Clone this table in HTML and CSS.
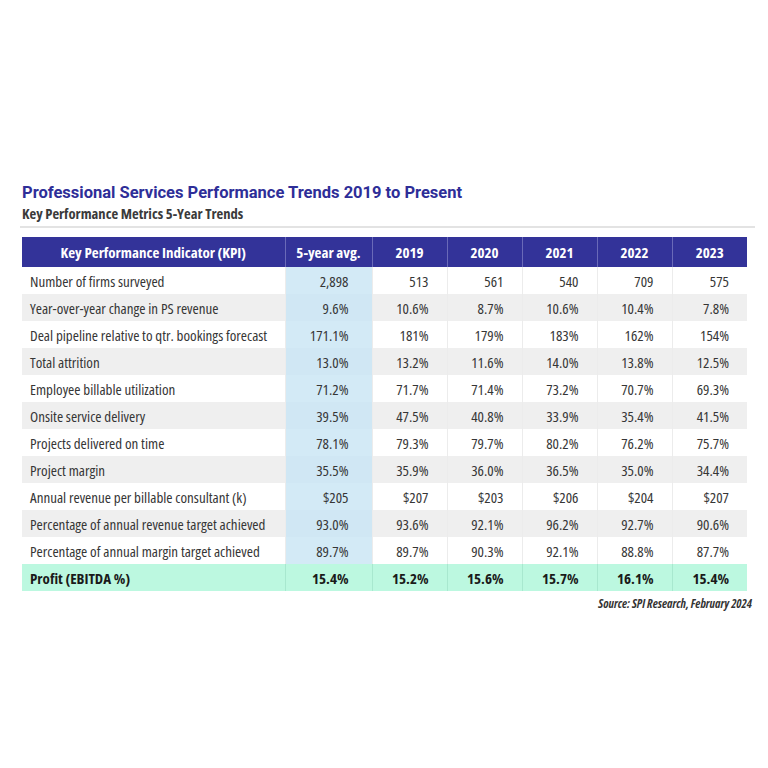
FILE: index.html
```html
<!DOCTYPE html>
<html>
<head>
<meta charset="utf-8">
<link rel="stylesheet" href="styles.css">
</head>
<body>
<div class="page">
  <h1 class="title">Professional Services Performance Trends 2019 to Present</h1>
  <h2 class="subtitle">Key Performance Metrics 5-Year Trends</h2>
  <div class="rule"></div>
  <table class="kpi">
    <colgroup>
      <col class="c-kpi"><col class="c-avg"><col class="c-yr"><col class="c-yr"><col class="c-yr"><col class="c-yr"><col class="c-yr">
    </colgroup>
    <thead>
      <tr><th>Key Performance Indicator (KPI)</th><th>5-year avg.</th><th>2019</th><th>2020</th><th>2021</th><th>2022</th><th>2023</th></tr>
    </thead>
    <tbody>
      <tr><td>Number of firms surveyed</td><td class="avg">2,898</td><td>513</td><td>561</td><td>540</td><td>709</td><td>575</td></tr>
      <tr class="alt"><td>Year-over-year change in PS revenue</td><td class="avg">9.6%</td><td>10.6%</td><td>8.7%</td><td>10.6%</td><td>10.4%</td><td>7.8%</td></tr>
      <tr><td>Deal pipeline relative to qtr. bookings forecast</td><td class="avg">171.1%</td><td>181%</td><td>179%</td><td>183%</td><td>162%</td><td>154%</td></tr>
      <tr class="alt"><td>Total attrition</td><td class="avg">13.0%</td><td>13.2%</td><td>11.6%</td><td>14.0%</td><td>13.8%</td><td>12.5%</td></tr>
      <tr><td>Employee billable utilization</td><td class="avg">71.2%</td><td>71.7%</td><td>71.4%</td><td>73.2%</td><td>70.7%</td><td>69.3%</td></tr>
      <tr class="alt"><td>Onsite service delivery</td><td class="avg">39.5%</td><td>47.5%</td><td>40.8%</td><td>33.9%</td><td>35.4%</td><td>41.5%</td></tr>
      <tr><td>Projects delivered on time</td><td class="avg">78.1%</td><td>79.3%</td><td>79.7%</td><td>80.2%</td><td>76.2%</td><td>75.7%</td></tr>
      <tr class="alt"><td>Project margin</td><td class="avg">35.5%</td><td>35.9%</td><td>36.0%</td><td>36.5%</td><td>35.0%</td><td>34.4%</td></tr>
      <tr><td>Annual revenue per billable consultant (k)</td><td class="avg">$205</td><td>$207</td><td>$203</td><td>$206</td><td>$204</td><td>$207</td></tr>
      <tr class="alt"><td>Percentage of annual revenue target achieved</td><td class="avg">93.0%</td><td>93.6%</td><td>92.1%</td><td>96.2%</td><td>92.7%</td><td>90.6%</td></tr>
      <tr><td>Percentage of annual margin target achieved</td><td class="avg">89.7%</td><td>89.7%</td><td>90.3%</td><td>92.1%</td><td>88.8%</td><td>87.7%</td></tr>
      <tr class="profit"><td>Profit (EBITDA %)</td><td class="avg">15.4%</td><td>15.2%</td><td>15.6%</td><td>15.7%</td><td>16.1%</td><td>15.4%</td></tr>
    </tbody>
  </table>
  <p class="source">Source: SPI Research, February 2024</p>
</div>
</body>
</html>
```

FILE: styles.css
```css
html, body {
  margin: 0;
  padding: 0;
  background: #ffffff;
}
.page {
  width: 735px;
  margin-left: 20px;
  padding-top: 182px;
  font-family: "Open Sans", "Liberation Sans", sans-serif;
  font-stretch: condensed;
  color: #333333;
}
.title {
  margin: 0 0 0 2px;
  font-family: "Roboto", "Liberation Sans", sans-serif;
  font-stretch: normal;
  font-weight: 700;
  font-size: 16.5px;
  line-height: 22px;
  color: #2e2e98;
}
.subtitle {
  margin: 0 0 0 2px;
  font-weight: 700;
  font-size: 14.6px;
  line-height: 18px;
  color: #3a3a3a;
}
.rule {
  height: 2px;
  background: #e3e3e3;
  margin-top: 4px;
  margin-bottom: 9px;
}
.kpi {
  margin-left: 2px;
  width: 725px;
  border-collapse: collapse;
  table-layout: fixed;
  font-size: 15px;
}
.c-kpi { width: 263px; }
.c-avg { width: 87px; }
.c-yr { width: 75px; }
.kpi th {
  height: 30px;
  padding: 0;
  background: #333399;
  color: #ffffff;
  font-weight: 700;
  text-align: center;
  border-left: 1px solid #6a6ab8;
}
.kpi th:first-child { border-left: none; }
.kpi td {
  height: 27px;
  padding: 0 18px 0 0;
  text-align: right;
  border-left: 1px solid #ececec;
  color: #363636;
  font-weight: 500;
}
.kpi td:first-child {
  text-align: left;
  padding: 0 0 0 8px;
  border-left: none;
}
.kpi td.avg {
  background: #d3eaf6;
  padding-right: 23px;
}
.kpi tr.alt td { background: #efefef; }
.kpi tr.alt td.avg { background: #d0e7f4; }
.kpi tr.profit td {
  background: #bcf8e0;
  font-weight: 700;
  color: #1a1a1a;
  border-left-color: #a8e8cf;
}
.source {
  margin: 4px 3px 0 0;
  text-align: right;
  font-size: 12px;
  font-weight: 700;
  font-style: italic;
  color: #333333;
}
```
